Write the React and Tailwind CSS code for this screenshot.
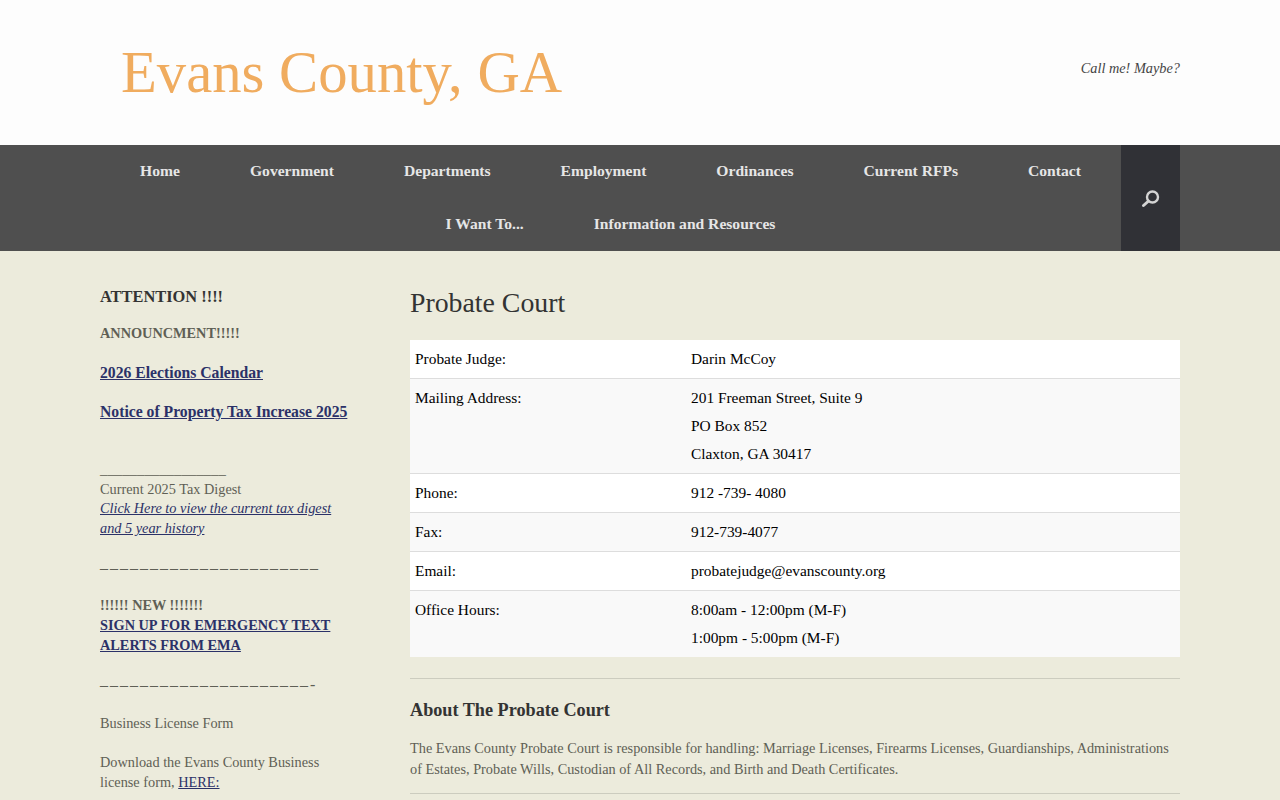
import React from 'react';

const serif = "font-['Liberation_Serif',serif]";

const menuTop = ['Home', 'Government', 'Departments', 'Employment', 'Ordinances', 'Current RFPs', 'Contact'];
const menuBottom = ['I Want To...', 'Information and Resources'];

const rows = [
  { label: 'Probate Judge:', lines: ['Darin McCoy'] },
  { label: 'Mailing Address:', lines: ['201 Freeman Street, Suite 9', 'PO Box 852', 'Claxton, GA 30417'] },
  { label: 'Phone:', lines: ['912 -739- 4080'] },
  { label: 'Fax:', lines: ['912-739-4077'] },
  { label: 'Email:', lines: ['probatejudge@evanscounty.org'] },
  { label: 'Office Hours:', lines: ['8:00am - 12:00pm (M-F)', '1:00pm - 5:00pm (M-F)'] },
];

const MenuRow = ({ items }) => (
  <ul className="flex justify-center">
    {items.map(item => (
      <li key={item} className="px-[35px] h-[53px] pb-[2px] flex items-center text-[15.6px] font-bold text-[#e6e6e6]">{item}</li>
    ))}
  </ul>
);

const Link = ({ children, className = '' }) => (
  <a href="#" className={`text-[#2b3168] underline ${className}`}>{children}</a>
);

const App = () => {
  return (
    <div className={`${serif} min-h-screen bg-[#ecebdc] text-[14.3px]`}>

      {/* Header */}
      <header className="h-[145px] bg-[#fdfdfd]">
        <div className="w-[1080px] mx-auto h-full flex justify-between pl-[21px]">
          <h1 className="text-[58.7px] leading-[145px] text-[#f0ac5f]">Evans County, GA</h1>
          <p className="pt-[58px] leading-[20px] italic text-[#444]">Call me! Maybe?</p>
        </div>
      </header>

      {/* Nav */}
      <nav className="h-[106px] bg-[#4f4f4f]">
        <div className="w-[1080px] mx-auto flex">
          <div className="flex-1">
            <MenuRow items={menuTop} />
            <MenuRow items={menuBottom} />
          </div>
          <div className="w-[59px] h-[106px] bg-[#303136] flex items-center justify-center">
            <svg width="20" height="20" viewBox="0 0 20 20" fill="none" stroke="#d4d4d4" strokeLinecap="round" className="mt-[1px]">
              <circle cx="11.5" cy="8" r="5.5" strokeWidth="2.4" />
              <path d="M7 12.5 L2.5 16.5" strokeWidth="3" />
            </svg>
          </div>
        </div>
      </nav>

      {/* Content */}
      <div className="w-[1080px] mx-auto flex justify-between pt-[34px]">

        <aside className="w-[250px] leading-[19.6px] text-[#5f5f55]">
          <h3 className="text-[16.4px] font-bold text-[#333] leading-[23px] mb-[16px]">ATTENTION !!!!</h3>
          <p className="font-bold mb-[19.6px]">ANNOUNCMENT!!!!!</p>
          <p className="mb-[19.6px] text-[15.7px]"><Link className="font-bold">2026 Elections Calendar</Link></p>
          <p className="mb-[38.2px] text-[15.7px]"><Link className="font-bold">Notice of Property Tax Increase 2025</Link></p>
          <p className="text-[14.8px]">_________________</p>
          <p className="mb-[19.6px]">
            Current 2025 Tax Digest<br />
            <Link className="italic">Click Here to view the current tax digest<br />and 5 year history</Link>
          </p>
          <p className="mb-[18.6px] text-[16px] tracking-[2px]">––––––––––––––––––––––</p>
          <p className="mb-[19.6px]">
            <b>!!!!!! NEW !!!!!!!</b><br />
            <Link className="font-bold">SIGN UP FOR EMERGENCY TEXT<br />ALERTS FROM EMA</Link>
          </p>
          <p className="mb-[19.6px] text-[16px] tracking-[2px]">–––––––––––––––––––––-</p>
          <p className="mb-[19.6px]">Business License Form</p>
          <p>Download the Evans County Business<br />license form, <Link>HERE:</Link></p>
        </aside>

        <main className="w-[770px]">
          <h1 className="text-[27.8px] leading-[36px] text-[#333] mb-[19px]">Probate Court</h1>
          <table className="w-full table-fixed border-separate border-spacing-0 text-black text-[15.4px]">
            <tbody>
              {rows.map((row, i) => (
                <tr key={row.label} className={i % 2 ? 'bg-[#f9f9f9]' : 'bg-white'}>
                  <td className={`w-[276px] px-[5px] py-[5px] align-top leading-[28px] ${i < rows.length - 1 ? 'border-b border-[#dddddd]' : ''}`}>{row.label}</td>
                  <td className={`px-[5px] py-[5px] align-top leading-[28px] ${i < rows.length - 1 ? 'border-b border-[#dddddd]' : ''}`}>
                    {row.lines.map(line => <p key={line}>{line}</p>)}
                  </td>
                </tr>
              ))}
            </tbody>
          </table>
          <hr className="mt-[21px] border-[#ccccbf]" />
          <h3 className="mt-[18px] text-[18.2px] font-bold leading-[26px] text-[#333]">About The Probate Court</h3>
          <p className="mt-[15px] leading-[21px] text-[#5f5f55]">
            The Evans County Probate Court is responsible for handling: Marriage Licenses, Firearms Licenses, Guardianships, Administrations<br />
            of Estates, Probate Wills, Custodian of All Records, and Birth and Death Certificates.
          </p>
          <hr className="mt-[13px] border-[#ccccbf]" />
        </main>
      </div>
    </div>
  );
};

export default App;
